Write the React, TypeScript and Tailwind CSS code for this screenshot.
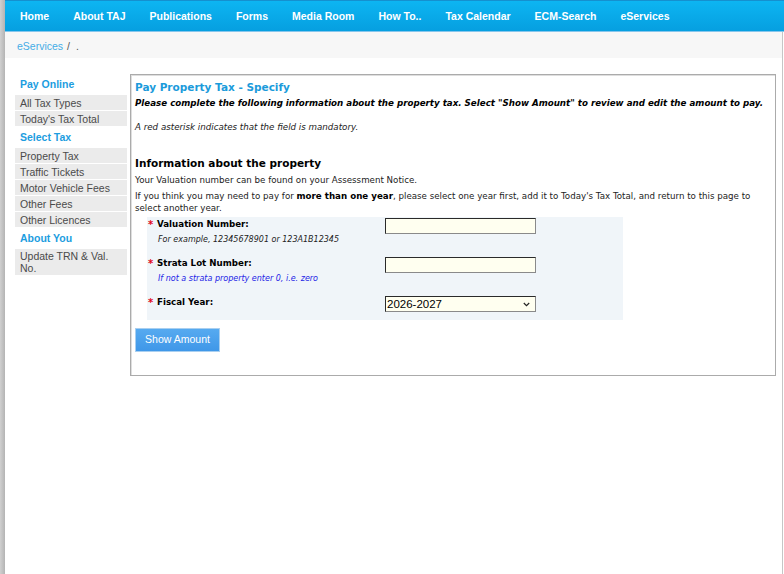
import React from 'react';

const navItems = ['Home', 'About TAJ', 'Publications', 'Forms', 'Media Room', 'How To..', 'Tax Calendar', 'ECM-Search', 'eServices'];

const sideGroups = [
  { title: 'Pay Online', links: ["All Tax Types", "Today's Tax Total"] },
  { title: 'Select Tax', links: ['Property Tax', 'Traffic Tickets', 'Motor Vehicle Fees', 'Other Fees', 'Other Licences'] },
  { title: 'About You', links: ['Update TRN & Val. No.'] },
];

const sans = "font-['Liberation_Sans',Arial,sans-serif]";
const verdana = "font-['DejaVu_Sans',Verdana,sans-serif]";

function Field({ label, hint, hintClass, children }: { label: string; hint?: string; hintClass?: string; children: React.ReactNode }) {
  return (
    <div className="flex items-start">
      <div className="w-[238px] shrink-0">
        <div className="flex h-[13px] items-center pl-[1px]">
          <span className="w-[9px] text-[10px] font-bold leading-[13px] text-[#e3061b]">*</span>
          <span className="text-[8.7px] font-bold leading-[13px] text-black">{label}</span>
        </div>
        {hint && <div className={`mt-[3px] pl-[11px] text-[8px] italic leading-[12px] ${hintClass}`}>{hint}</div>}
      </div>
      {children}
    </div>
  );
}

const inputCls =
  'block h-[16px] w-[151px] border border-t-[#2a2a2a] border-l-[#2a2a2a] border-r-[#8a8a8a] border-b-[#8a8a8a] bg-[#fffff0] outline-none';

export default function App() {
  return (
    <div className={`flex min-h-[574px] w-full bg-white ${sans}`}>
      {/* window edge */}
      <div className="w-[5px] shrink-0 bg-gradient-to-r from-[#d0d0d0] to-[#b4b4b4]" />

      <div className="flex min-w-0 flex-1 flex-col">
        <nav className="flex h-[32px] items-center gap-[24px] border-t border-t-[#1590cf] border-b border-b-[#86c6ec] bg-gradient-to-b from-[#0db5f2] to-[#069fe0] pl-[15px]">
          {navItems.map((item) => (
            <a key={item} className="text-[10.5px] font-bold leading-none text-white">
              {item}
            </a>
          ))}
        </nav>

        <div className="mr-[1px] flex flex-1 flex-col border-r border-r-[#c6c6c6]">
          <div className="flex h-[26px] items-center bg-[#f7f7f7] pl-[12px] pt-[3px] text-[10.5px]">
            <a className="text-[#45ade6]">eServices</a>
            <span className="ml-[4px] text-[#555]">/</span>
            <span className="ml-[6px] text-[#555]">.</span>
          </div>

          <div className="flex items-start pl-[10px] pt-[16px]">
            {/* side menu */}
            <aside className="w-[112px] shrink-0">
              {sideGroups.map((group) => (
                <div key={group.title}>
                  <div className="flex h-[21px] items-center pl-[5px] text-[10.5px] font-bold text-[#1c9de0]">
                    {group.title}
                  </div>
                  {group.links.map((link) => (
                    <div
                      key={link}
                      className="mb-[1px] flex min-h-[15px] items-center bg-[#ebebeb] py-[1px] pl-[5px] pr-[4px] text-[10.5px] leading-[12px] text-[#4a4a4a]"
                    >
                      {link}
                    </div>
                  ))}
                </div>
              ))}
            </aside>

            {/* form panel */}
            <main className={`ml-[3px] w-[646px] border border-[#ababab] px-[4px] pb-[23px] pt-[4px] shadow-[inset_1px_1px_0_#dedede] ${verdana}`}>
              <h1 className="text-[10.5px] font-bold leading-[16px] text-[#1b9bdb]">Pay Property Tax - Specify</h1>
              <p className="mt-[2px] text-[8.7px] font-bold italic leading-[12px] text-black">
                Please complete the following information about the property tax. Select "Show Amount" to review and edit the amount to pay.
              </p>
              <p className="mt-[12px] text-[8.7px] italic leading-[12px] text-[#222]">
                A red asterisk indicates that the field is mandatory.
              </p>

              <h2 className="mt-[23px] text-[10.5px] font-bold leading-[15px] text-black">Information about the property</h2>
              <p className="mt-[3px] text-[8.7px] leading-[12px] text-[#222]">
                Your Valuation number can be found on your Assessment Notice.
              </p>
              <p className="mt-[4px] text-[8.7px] leading-[12px] text-[#222]">
                If you think you may need to pay for <span className="font-bold text-black">more than one year</span>, please select one year first, add it to Today's Tax Total, and return to this page to select another year.
              </p>

              <div className="ml-[12px] mt-[3px] w-[476px] bg-[#f0f5f9] pb-[8px] pt-[1px]">
                <Field label="Valuation Number:" hint="For example, 12345678901 or 123A1B12345" hintClass="text-[#222]">
                  <input className={inputCls} />
                </Field>
                <div className="mt-[11px]">
                  <Field label="Strata Lot Number:" hint="If not a strata property enter 0, i.e. zero" hintClass="text-[#2323e6]">
                    <input className={inputCls} />
                  </Field>
                </div>
                <div className="mt-[11px]">
                  <Field label="Fiscal Year:">
                    <div className="relative">
                      <select
                        defaultValue="2026-2027"
                        className={`${inputCls} appearance-none px-[1px] text-[11.5px] leading-[14px] text-black ${sans}`}
                      >
                        <option>2026-2027</option>
                        <option>2025-2026</option>
                        <option>2024-2025</option>
                      </select>
                      <svg
                        className="pointer-events-none absolute right-[6px] top-[6px]"
                        width="7"
                        height="5"
                        viewBox="0 0 7 5"
                        fill="none"
                        stroke="#222"
                        strokeWidth="1.2"
                      >
                        <path d="M0.8 1l2.7 2.6L6.2 1" />
                      </svg>
                    </div>
                  </Field>
                </div>
              </div>

              <button
                className={`mt-[8px] h-[24px] w-[85px] border border-[#a9cff0] bg-gradient-to-b from-[#56aaf0] to-[#3f97e8] text-[10.5px] text-white ${sans}`}
              >
                Show Amount
              </button>
            </main>
          </div>
        </div>
      </div>
    </div>
  );
}
